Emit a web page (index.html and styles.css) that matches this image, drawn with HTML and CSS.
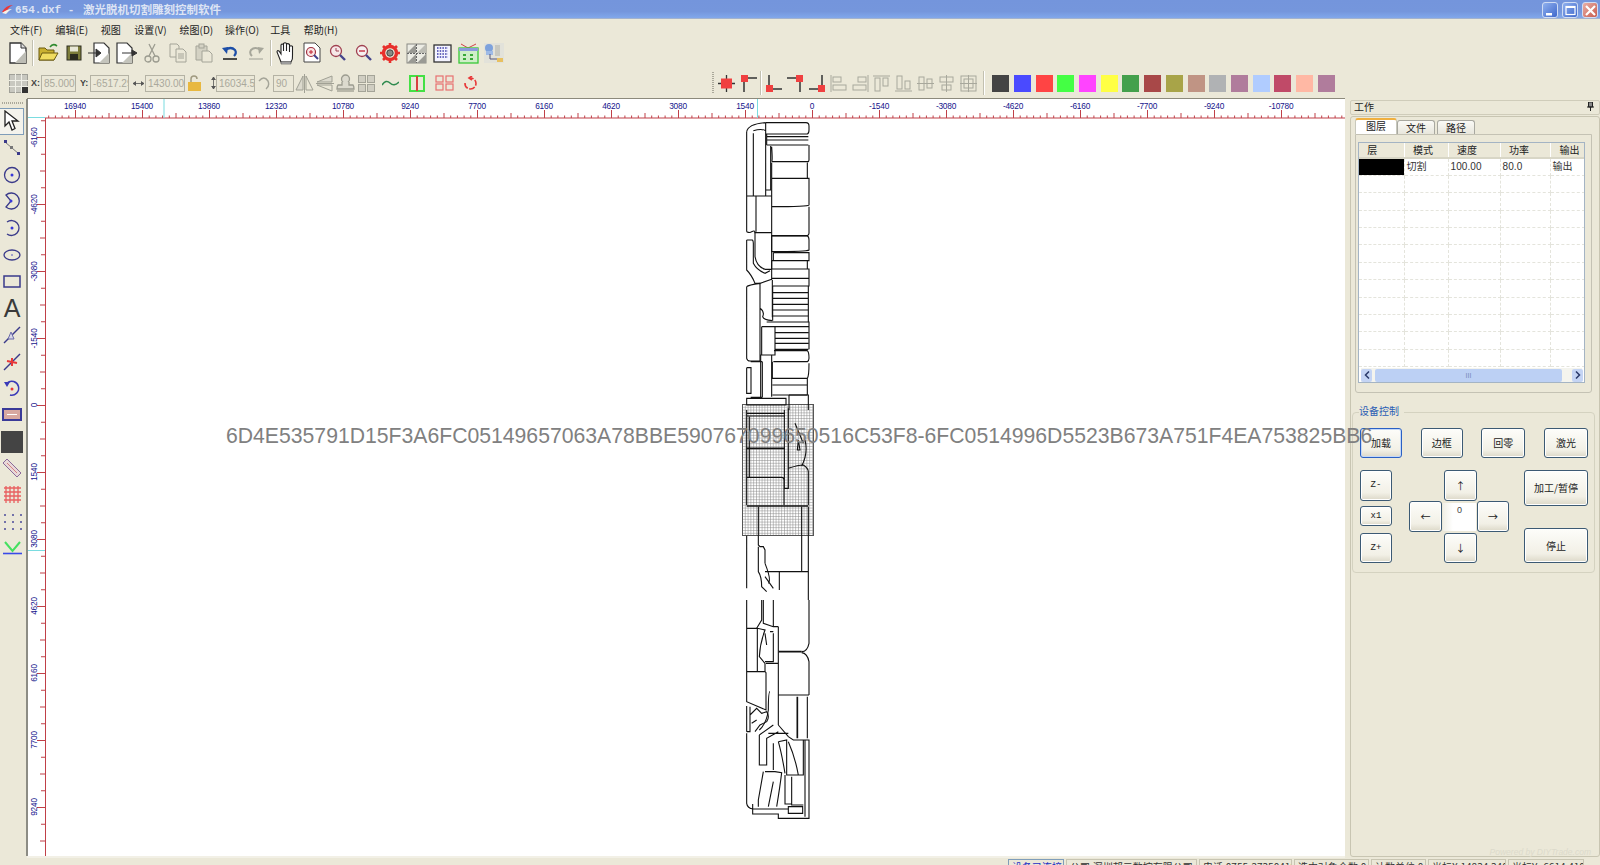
FILE: index.html
```html
<!DOCTYPE html>
<html lang="zh">
<head>
<meta charset="utf-8">
<title>654.dxf - 激光脱机切割雕刻控制软件</title>
<link rel="stylesheet" href="styles.css">
</head>
<body>
<div class="app">
  <header class="titlebar">
    <svg class="app-icon" width="11" height="11" viewBox="0 0 11 11"><path d="M0 8Q4 1 11 1Q6 3 4 9Z" fill="#e8383a"/><path d="M0 9Q5 5 10 5Q6 7 4 10Z" fill="#f4f0e8"/></svg>
    <span class="title-file">654.dxf - </span><span class="title-name">激光脱机切割雕刻控制软件</span>
    <div class="winbtns">
      <div class="winbtn"><svg width="15" height="15" viewBox="0 0 15 15"><rect x="3" y="10" width="6" height="2.5" fill="#fff"/></svg></div>
      <div class="winbtn"><svg width="15" height="15" viewBox="0 0 15 15"><rect x="3" y="3.5" width="9" height="8" fill="none" stroke="#fff" stroke-width="1.2"/><rect x="3" y="3" width="9" height="2" fill="#fff"/></svg></div>
      <div class="winbtn close"><svg width="15" height="15" viewBox="0 0 15 15"><path d="M3 3L12 12M12 3L3 12" stroke="#fff" stroke-width="2.2"/></svg></div>
    </div>
  </header>

  <nav class="menubar">
    <span class="mi w31">文件(F)</span><span class="mi w31">编辑(E)</span><span class="mi w20">视图</span><span class="mi w31">设置(V)</span><span class="mi w31">绘图(D)</span><span class="mi w31">操作(O)</span><span class="mi w20">工具</span><span class="mi w31">帮助(H)</span>
  </nav>

  <div class="toolbar tb1">
    <div class="tool"><svg width="22" height="24" viewBox="0 0 22 24"><path d="M3 2H14L19 7V22H3Z" fill="#fff" stroke="#333" stroke-width="1.3"/><path d="M19 10V22H8Z" fill="#bdbdb5"/><path d="M14 2V7H19" fill="#ddd" stroke="#333"/></svg></div>
    <div class="sep"></div>
    <div class="tool"><svg width="22" height="22" viewBox="0 0 22 22"><path d="M2 6H8L10 8H17V18H2Z" fill="#c9b030" stroke="#6a5a10"/><path d="M5 11H21L17 18H2Z" fill="#f0dc60" stroke="#6a5a10"/><path d="M13 5Q16 1 20 4" fill="none" stroke="#2e8a2e" stroke-width="1.6"/></svg></div>
    <div class="tool"><svg width="18" height="18" viewBox="0 0 18 18"><rect x="2" y="2" width="14" height="14" fill="#7d7d3a" stroke="#2c2c20"/><rect x="5" y="2.5" width="8" height="5" fill="#e8e8d8"/><rect x="5" y="10" width="8" height="6" fill="#2c2c20"/></svg></div>
    <div class="tool"><svg width="24" height="24" viewBox="0 0 24 24"><path d="M6 2H16L21 7V22H6Z" fill="#fff" stroke="#333" stroke-width="1.2"/><path d="M21 12V22H11Z" fill="#c4c4bc"/><path d="M0 12H11M8 8L13 12L8 16Z" fill="#333" stroke="#333"/></svg></div>
    <div class="tool"><svg width="24" height="24" viewBox="0 0 24 24"><path d="M3 2H13L18 7V22H3Z" fill="#fff" stroke="#333" stroke-width="1.2"/><path d="M18 12V22H8Z" fill="#c4c4bc"/><path d="M8 12H19M18 9L23 12L18 15Z" fill="#333" stroke="#333"/></svg></div>
    <div class="tool"><svg width="18" height="20" viewBox="0 0 18 20" fill="none" stroke="#9c9c90" stroke-width="1.3"><path d="M6 1L12 13M12 1L6 13"/><circle cx="5" cy="16" r="3"/><circle cx="13" cy="16" r="3"/></svg></div>
    <div class="tool"><svg width="20" height="20" viewBox="0 0 20 20" fill="#ebe8d8" stroke="#a4a498"><path d="M2 1H9L11 3V14H2Z"/><path d="M8 6H15L18 9V19H8Z"/><path d="M10 11H16M10 13H16M10 15H16"/></svg></div>
    <div class="tool"><svg width="20" height="20" viewBox="0 0 20 20" fill="#d4d2c4" stroke="#a4a498"><path d="M2 3H13V17H2Z"/><rect x="5" y="1" width="5" height="4"/><path d="M8 8H15L18 11V19H8Z" fill="#ebe8d8"/></svg></div>
    <div class="tool"><svg width="18" height="18" viewBox="0 0 18 18" fill="none"><path d="M4 6Q10 2 14 6Q16 9 13 12" stroke="#1c4ea8" stroke-width="2.2"/><path d="M1 4L7 3L6 10Z" fill="#1c4ea8"/><path d="M2 15H16" stroke="#222" stroke-width="1.6"/></svg></div>
    <div class="tool"><svg width="18" height="18" viewBox="0 0 18 18" fill="none"><path d="M14 6Q8 2 4 6Q2 9 5 12" stroke="#a6a69a" stroke-width="2"/><path d="M17 4L11 3L12 10Z" fill="#a6a69a"/><path d="M2 15H16" stroke="#b4b4a8" stroke-width="1.4"/></svg></div>
    <div class="sep"></div>
    <div class="tool"><svg width="20" height="24" viewBox="0 0 20 24"><path d="M5 21L1 11Q1 9 3 10L5 13V4Q6 2 7.500 4V10V2.500Q9 1 10.500 2.500V10V3Q12 2 13.500 3.500V11V5.500Q15 4 16.500 5.500V14Q17 18 15 21Z" fill="#fff" stroke="#222" stroke-width="1.1"/><path d="M5 21H15V23H5Z" fill="#bbb" stroke="#555" stroke-width=".6"/></svg></div>
    <div class="tool"><svg width="20" height="22" viewBox="0 0 20 22"><path d="M2 1H13L18 6V20H2Z" fill="#fff" stroke="#444"/><circle cx="9" cy="10" r="4.500" fill="#fbe4e4" stroke="#a03040" stroke-width="1.2"/><path d="M9 8V12M7 10H11" stroke="#c02030"/><path d="M12 13L16 17" stroke="#40408c" stroke-width="2"/></svg></div>
    <div class="tool"><svg width="18" height="18" viewBox="0 0 18 18"><circle cx="7" cy="7" r="5.500" fill="#f6e8e8" stroke="#a04050" stroke-width="1.3"/><path d="M7 4V7H10" stroke="#a04050" fill="none"/><path d="M11 11L16 16" stroke="#45458c" stroke-width="2.400"/></svg></div>
    <div class="tool"><svg width="18" height="18" viewBox="0 0 18 18"><circle cx="7" cy="7" r="5.500" fill="#f6f0f0" stroke="#a04050" stroke-width="1.3"/><path d="M4 7H10" stroke="#c02030" stroke-width="1.300"/><path d="M11 11L16 16" stroke="#45458c" stroke-width="2.400"/></svg></div>
    <div class="tool"><svg width="20" height="20" viewBox="0 0 20 20"><circle cx="10" cy="10" r="6.500" fill="none" stroke="#e8302c" stroke-width="3.400"/><path d="M10 0V4M10 16V20M0 10H4M16 10H20M3 3L6 6M14 14L17 17M3 17L6 14M14 6L17 3" stroke="#e8302c" stroke-width="2.600"/><circle cx="10" cy="10" r="3.200" fill="#8a8a84" stroke="#444"/></svg></div>
    <div class="tool"><svg width="21" height="21" viewBox="0 0 21 21"><rect x="1" y="1" width="19" height="19" fill="#ecece4" stroke="#8a8a84"/><path d="M1 10L10 1V10ZM11 20L20 11V20ZM1 20L10 11V20Z" fill="#9a9a94"/><path d="M11 10L20 1V10Z" fill="#bcbcb4"/><path d="M10.500 1V20M1 10.500H20" stroke="#666" stroke-dasharray="2 1"/></svg></div>
    <div class="tool"><svg width="19" height="19" viewBox="0 0 19 19"><rect x="1" y="1" width="17" height="17" fill="#f4f4ff" stroke="#333" stroke-width="1.300"/><path d="M4 4H15M4 7H15M4 10H15M4 13H15" stroke="#3a3aa8" stroke-width="1.500" stroke-dasharray="1.500 1.200"/></svg></div>
    <div class="tool"><svg width="21" height="21" viewBox="0 0 21 21"><path d="M3 1L10 5L18 1" fill="none" stroke="#d04048"/><rect x="1" y="5" width="19" height="15" fill="#cfeec8" stroke="#38c838" stroke-width="1.300"/><rect x="1" y="5" width="19" height="3" fill="#8a9adc"/><rect x="5" y="11" width="3" height="2" fill="#38a838"/><rect x="12" y="11" width="3" height="2" fill="#38a838"/><rect x="5" y="15" width="3" height="2" fill="#38a838"/><rect x="12" y="15" width="3" height="2" fill="#38a838"/></svg></div>
    <div class="tool"><svg width="22" height="22" viewBox="0 0 22 22"><rect x="1" y="1" width="20" height="20" fill="#e2e2da"/><circle cx="6" cy="6" r="4" fill="#7ea2dc"/><rect x="3" y="9" width="7" height="4" fill="#9ebae6"/><path d="M7 12V17H15" fill="none" stroke="#557"/><rect x="14" y="16" width="6" height="4" fill="#e8c060"/><rect x="12" y="3" width="5" height="11" fill="#c8c8c0"/></svg></div>
  </div>

  <div class="toolbar tb2">
    <svg class="m-none" width="19" height="19" viewBox="0 0 19 19"><rect x=".5" y=".5" width="18" height="18" fill="#c8c8c0" stroke="#a0a098"/><path d="M6.500 0V19M12.500 0V19M0 6.500H19M0 12.500H19" stroke="#f0f0e8"/><rect x="13" y="13" width="6" height="6" fill="#333"/></svg>
    <span class="lbl m3">X:</span><div class="inp m2 w35">85.000</div>
    <span class="lbl m4">Y:</span><div class="inp m2 w39">-6517.29</div>
    <svg class="m4" width="11" height="9" viewBox="0 0 11 9"><path d="M0 4.500H11M3 2.500L0 4.500L3 6.500M8 2.500L11 4.500L8 6.500" fill="#555" stroke="#555" stroke-width=".8"/></svg><div class="inp m1 w40">1430.00</div>
    <svg class="m3" width="13" height="16" viewBox="0 0 13 16"><path d="M3 7V4Q3 1 6 1Q9 1 9 4" fill="none" stroke="#a09a80" stroke-width="1.500"/><rect x="0" y="7" width="13" height="9" fill="#e8b840"/></svg>
    <svg class="m10" width="5" height="12" viewBox="0 0 5 12"><path d="M2.500 0V12M.5 3L2.500 0L4.500 3M.5 9L2.500 12L4.500 9" fill="#555" stroke="#555" stroke-width=".8"/></svg><div class="inp w39">16034.59</div>
    <svg class="m3" width="12" height="14" viewBox="0 0 12 14"><path d="M1 5Q6 -1 10 5Q12 10 8 13" fill="none" stroke="#a4a498" stroke-width="1.400"/></svg><div class="inp m3 w21">90</div>
    <svg class="m1" width="19" height="19" viewBox="0 0 19 19" fill="#dcdace" stroke="#a0a094"><path d="M8 2V16H1Z"/><path d="M11 2V16H18Z" fill="#ebe8d8"/><path d="M9.500 0V19"/></svg>
    <svg class="m2" width="18" height="19" viewBox="0 0 18 19" fill="#dcdace" stroke="#a0a094"><path d="M16 2V8H1Z"/><path d="M16 11V17L1 11Z" fill="#ebe8d8"/><path d="M0 9.500H18"/></svg>
    <svg class="m2" width="19" height="19" viewBox="0 0 19 19" fill="#dcdace" stroke="#9c9c90" stroke-width="1.300"><circle cx="9.500" cy="5" r="4"/><path d="M6 8V11H2Q1 12 1 15H18Q18 12 17 11H13V8"/><path d="M1 17H18"/></svg>
    <svg class="m3" width="17" height="17" viewBox="0 0 17 17" fill="#d0cec2" stroke="#a4a498"><rect x=".5" y=".5" width="7" height="7"/><rect x="9.500" y=".5" width="7" height="7"/><rect x=".5" y="9.500" width="7" height="7"/><rect x="9.500" y="9.500" width="7" height="7"/></svg>
    <svg class="m7" width="17" height="9" viewBox="0 0 17 9"><path d="M0 6Q4 0 8 4Q12 8 17 3" fill="none" stroke="#2e8a4e" stroke-width="1.500"/></svg>
    <svg class="m10" width="16" height="17" viewBox="0 0 16 17"><rect x="1" y="1" width="14" height="15" fill="none" stroke="#44e044" stroke-width="2"/><path d="M8 1V16" stroke="#d84040" stroke-width="2"/></svg>
    <svg class="m10" width="19" height="16" viewBox="0 0 19 16" fill="none" stroke="#e87070" stroke-width="1.200"><rect x="1" y="1" width="7" height="6"/><rect x="11" y="1" width="7" height="6"/><rect x="1" y="9" width="7" height="6"/><rect x="11" y="9" width="7" height="6"/></svg>
    <svg class="m9" width="15" height="15" viewBox="0 0 15 15" fill="none" stroke="#e83838" stroke-width="1.600"><path d="M2 7A5.500 5.500 0 1 0 7 2" stroke-dasharray="6 1.500"/><path d="M9 0L6 2L9 4" /></svg>

    <div class="grip second"></div>
    <div class="mini"><svg width="17" height="17" viewBox="0 0 17 17"><path d="M8.500 0V17M0 8.500H17" stroke="#333" stroke-width="1.300"/><rect x="3" y="3.500" width="11" height="10" fill="#f04040"/></svg></div>
    <div class="mini"><svg width="17" height="17" viewBox="0 0 17 17"><path d="M5 3H17M4 3V17" stroke="#333" stroke-width="1.500"/><rect x="1" y="0" width="7" height="7" fill="#f04040"/></svg></div>
    <div class="sep narrow"></div>
    <div class="mini"><svg width="17" height="17" viewBox="0 0 17 17"><path d="M4 0V14H17" fill="none" stroke="#333" stroke-width="1.500"/><rect x="1" y="10" width="7" height="7" fill="#f04040"/></svg></div>
    <div class="mini"><svg width="17" height="17" viewBox="0 0 17 17"><path d="M0 3H13V17" fill="none" stroke="#333" stroke-width="1.500"/><rect x="9" y="0" width="7" height="7" fill="#f04040"/></svg></div>
    <div class="mini"><svg width="17" height="17" viewBox="0 0 17 17"><path d="M0 14H13V0" fill="none" stroke="#333" stroke-width="1.500"/><rect x="9" y="10" width="7" height="7" fill="#f04040"/></svg></div>
    <div class="mini"><svg width="17" height="17" viewBox="0 0 17 17" fill="none" stroke="#a8a89c"><path d="M1 0V17"/><rect x="3" y="2" width="8" height="5"/><rect x="3" y="10" width="13" height="5"/></svg></div>
    <div class="mini"><svg width="17" height="17" viewBox="0 0 17 17" fill="none" stroke="#a8a89c"><path d="M16 0V17"/><rect x="6" y="2" width="8" height="5"/><rect x="1" y="10" width="13" height="5"/></svg></div>
    <div class="mini"><svg width="17" height="17" viewBox="0 0 17 17" fill="none" stroke="#a8a89c"><path d="M0 1H17"/><rect x="2" y="3" width="5" height="13"/><rect x="10" y="3" width="5" height="8"/></svg></div>
    <div class="mini"><svg width="17" height="17" viewBox="0 0 17 17" fill="none" stroke="#a8a89c"><path d="M0 16H17"/><rect x="2" y="1" width="5" height="13"/><rect x="10" y="6" width="5" height="8"/></svg></div>
    <div class="mini"><svg width="17" height="17" viewBox="0 0 17 17" fill="none" stroke="#a8a89c"><path d="M0 8.500H17"/><rect x="2" y="2" width="5" height="13"/><rect x="10" y="4" width="5" height="9"/></svg></div>
    <div class="mini"><svg width="17" height="17" viewBox="0 0 17 17" fill="none" stroke="#a8a89c"><path d="M8.500 0V17"/><rect x="2" y="2" width="13" height="5"/><rect x="4" y="10" width="9" height="5"/></svg></div>
    <div class="mini"><svg width="17" height="17" viewBox="0 0 17 17" fill="none" stroke="#a8a89c"><rect x="1" y="1" width="15" height="15"/><path d="M8.500 0V17M0 8.500H17"/><rect x="4" y="4" width="9" height="9"/></svg></div>
    <div class="sep narrow after"></div>
    <div class="swatches">
      <i class="sw c1"></i><i class="sw c2"></i><i class="sw c3"></i><i class="sw c4"></i><i class="sw c5"></i><i class="sw c6"></i><i class="sw c7"></i><i class="sw c8"></i><i class="sw c9"></i><i class="sw c10"></i><i class="sw c11"></i><i class="sw c12"></i><i class="sw c13"></i><i class="sw c14"></i><i class="sw c15"></i><i class="sw c12"></i>
    </div>
  </div>

  <main class="workspace">
    <aside class="sidetools">
      <div class="grip-h"></div>
      <div class="st active"><svg width="20" height="22" viewBox="0 0 20 22"><path d="M3 1V16L7 12L10 20L13 18.500L10 11H16Z" fill="#fff" stroke="#222" stroke-width="1.300"/></svg></div>
      <div class="st"><svg width="18" height="18" viewBox="0 0 18 18"><path d="M2 3L16 15" stroke="#777"/><rect x="1" y="1" width="3" height="3" fill="#3a3a8a"/><rect x="7" y="7" width="3" height="3" fill="#777"/><rect x="14" y="13" width="3" height="3" fill="#3a3a8a"/></svg></div>
      <div class="st"><svg width="18" height="18" viewBox="0 0 18 18"><circle cx="9" cy="9" r="7.500" fill="none" stroke="#3a3a8a" stroke-width="1.300"/><circle cx="9" cy="9" r="1.500" fill="#3838d8"/></svg></div>
      <div class="st"><svg width="18" height="18" viewBox="0 0 18 18"><path d="M3 3A8 8 0 1 1 3 15L8 9Z" fill="none" stroke="#3a3a8a" stroke-width="1.300"/><circle cx="8" cy="9" r="1.500" fill="#3838d8"/></svg></div>
      <div class="st"><svg width="18" height="18" viewBox="0 0 18 18"><path d="M4 3A7.500 7.500 0 1 1 4 15" fill="none" stroke="#3a3a8a" stroke-width="1.300"/><circle cx="9" cy="9" r="1.500" fill="#3838d8"/></svg></div>
      <div class="st"><svg width="18" height="12" viewBox="0 0 18 12"><ellipse cx="9" cy="6" rx="8" ry="5" fill="none" stroke="#3a3a8a" stroke-width="1.300"/><circle cx="9" cy="6" r="1" fill="#8888c8"/></svg></div>
      <div class="st"><svg width="18" height="13" viewBox="0 0 18 13"><rect x="1" y="1" width="16" height="11" fill="none" stroke="#3a3a8a" stroke-width="1.500"/></svg></div>
      <div class="st big-a">A</div>
      <div class="st"><svg width="18" height="18" viewBox="0 0 18 18"><path d="M1 17L17 1" stroke="#3a3a8a" stroke-width="1.500"/><path d="M8 6L11 13L5 13Z" fill="#d8d8e8" stroke="#6a6aa8"/></svg></div>
      <div class="st"><svg width="18" height="18" viewBox="0 0 18 18"><path d="M1 17L17 1" stroke="#3a3a8a" stroke-width="1.500"/><path d="M4 8L14 10M9 5V13" stroke="#e83838" stroke-width="2"/></svg></div>
      <div class="st"><svg width="18" height="18" viewBox="0 0 18 18"><path d="M4 4A7 7 0 1 1 7 16" fill="none" stroke="#3a3ab8" stroke-width="1.500"/><path d="M1 3L7 3L4 8Z" fill="#3a3ab8"/><circle cx="9" cy="10" r="1.500" fill="#e83838"/></svg></div>
      <div class="st"><svg width="20" height="13" viewBox="0 0 20 13"><rect x="1" y="1" width="18" height="11" fill="#d8a8a0" stroke="#3a3a98" stroke-width="2"/><path d="M5 6.500H15" stroke="#fff"/></svg></div>
      <div class="st"><div class="dark-square"></div></div>
      <div class="st"><svg width="20" height="20" viewBox="0 0 20 20"><path d="M1 5L5 1L19 15L15 19Z" fill="#e8d8d8" stroke="#8a6a9a"/><path d="M5 5L15 15" stroke="#d88080"/></svg></div>
      <div class="st"><svg width="19" height="19" viewBox="0 0 19 19"><path d="M3 1V18M7 1V18M11 1V18M15 1V18M1 3H18M1 7H18M1 11H18M1 15H18" stroke="#e86060" stroke-width="1.300"/></svg></div>
      <div class="st"><svg width="19" height="19" viewBox="0 0 19 19" fill="#4a4a9a"><circle cx="2" cy="3" r="1"/><circle cx="10" cy="3" r="1"/><circle cx="18" cy="3" r="1"/><circle cx="2" cy="10" r="1"/><circle cx="10" cy="10" r="1"/><circle cx="18" cy="10" r="1"/><circle cx="2" cy="17" r="1"/><circle cx="10" cy="17" r="1"/><circle cx="18" cy="17" r="1"/></svg></div>
      <div class="st"><svg width="21" height="14" viewBox="0 0 21 14"><path d="M3 1L10.500 10L18 1" fill="none" stroke="#44e060" stroke-width="2"/><path d="M1 12.500H20" stroke="#3a4ae8" stroke-width="1.600"/></svg></div>
    </aside>

    <section class="canvas">
      <svg class="drawing" width="1317" height="757" viewBox="28 99 1317 757">
        <defs>
          <pattern id="hticks" patternUnits="userSpaceOnUse" x="812" y="110" width="67" height="8">
            <rect x="0" y="0" width="1" height="8" fill="#c04048"/><rect x="33.500" y="3" width="1" height="5" fill="#c04048"/>
            <rect x="6.700" y="5.500" width="1" height="2.500" fill="#c04048"/><rect x="13.400" y="5.500" width="1" height="2.500" fill="#c04048"/><rect x="20.100" y="5.500" width="1" height="2.500" fill="#c04048"/><rect x="26.800" y="5.500" width="1" height="2.500" fill="#c04048"/><rect x="40.200" y="5.500" width="1" height="2.500" fill="#c04048"/><rect x="46.900" y="5.500" width="1" height="2.500" fill="#c04048"/><rect x="53.600" y="5.500" width="1" height="2.500" fill="#c04048"/><rect x="60.300" y="5.500" width="1" height="2.500" fill="#c04048"/>
          </pattern>
          <pattern id="vticks" patternUnits="userSpaceOnUse" x="37" y="405" width="8" height="67">
            <rect x="0" y="0" width="8" height="1" fill="#c04048"/><rect x="3" y="33.500" width="5" height="1" fill="#c04048"/><rect x="4" y="16.750" width="4" height="1" fill="#c04048"/><rect x="4" y="50.250" width="4" height="1" fill="#c04048"/>
          </pattern>
          <pattern id="mesh" patternUnits="userSpaceOnUse" x="742" y="404" width="2.800" height="2.800">
            <path d="M0 0H2.800M0 0V2.800" stroke="#848484" stroke-width="1"/>
          </pattern>
        </defs>
        <rect x="45" y="110" width="1300" height="8" fill="url(#hticks)"/>
        <rect x="45" y="117.500" width="1300" height="1" fill="#c04048"/>
        <rect x="37" y="118" width="8" height="738" fill="url(#vticks)"/>
        <rect x="45" y="118" width="1" height="738" fill="#c04048"/>
        <rect x="163.500" y="99" width="1" height="19" fill="#7adce0"/>
        <rect x="757" y="99" width="1" height="19" fill="#7adce0"/>
        <rect x="28" y="117" width="17" height="1" fill="#7adce0"/>
        <rect x="28" y="550" width="17" height="1" fill="#7adce0"/>
        <g class="rl">
          <text x="75" y="108.500">16940</text><text x="142" y="108.500">15400</text><text x="209" y="108.500">13860</text><text x="276" y="108.500">12320</text><text x="343" y="108.500">10780</text><text x="410" y="108.500">9240</text><text x="477" y="108.500">7700</text><text x="544" y="108.500">6160</text><text x="611" y="108.500">4620</text><text x="678" y="108.500">3080</text><text x="745" y="108.500">1540</text><text x="812" y="108.500">0</text><text x="879" y="108.500">-1540</text><text x="946" y="108.500">-3080</text><text x="1013" y="108.500">-4620</text><text x="1080" y="108.500">-6160</text><text x="1147" y="108.500">-7700</text><text x="1214" y="108.500">-9240</text><text x="1281" y="108.500">-10780</text>
          <text transform="translate(36.500 137.500) rotate(-90)">-6160</text><text transform="translate(36.500 204.500) rotate(-90)">-4620</text><text transform="translate(36.500 271.500) rotate(-90)">-3080</text><text transform="translate(36.500 338.500) rotate(-90)">-1540</text><text transform="translate(36.500 405) rotate(-90)">0</text><text transform="translate(36.500 472) rotate(-90)">1540</text><text transform="translate(36.500 539) rotate(-90)">3080</text><text transform="translate(36.500 606) rotate(-90)">4620</text><text transform="translate(36.500 673) rotate(-90)">6160</text><text transform="translate(36.500 740) rotate(-90)">7700</text><text transform="translate(36.500 807) rotate(-90)">9240</text>
        </g>

        <rect x="742.500" y="404.500" width="71" height="131" fill="url(#mesh)" stroke="#555"/>

        <g class="cad" transform="translate(720 110) scale(.33333)">
          <path d="M137 38H258Q267 38 267 48V60Q267 70 262 72H137M140 72V105M140 80H265M140 90H265M140 105H265"/>
          <path d="M100 62Q125 55 137 62M80 65Q85 42 137 38M80 65V365M100 70V258M137 38V258M80 258H155M152 108V240H137M155 110Q158 155 155 155H265M267 105V150Q267 155 262 157"/>
          <path d="M155 158V205H262V158M155 205H267V285Q265 290 155 290ZM155 290V375M267 290V370Q267 375 262 377H155M108 258V365M155 258V375"/>
          <path d="M80 365Q90 370 95 365Q105 360 105 368H155M155 378H262Q267 380 267 390V420Q262 425 155 425V378"/>
          <path d="M160 428H267V452H155M160 428V452M155 452V477M262 452V477M155 477H267V528H158M155 505H267"/>
          <path d="M158 548H265M158 565H265M158 583H265M158 600H265M158 618H265M158 636H265M158 528V632M265 528V636M140 636H267V718M165 650H267M165 668H265M165 685H265M165 700H265M165 718H265"/>
          <path d="M162 722H262Q267 725 267 745Q267 752 262 755H160M157 755V805H262Q267 800 267 760M157 825H262M157 855H262M262 805V855"/>
          <path d="M105 365V440Q110 470 135 478H155M155 375V510M80 390H97Q100 392 100 400V460Q110 480 135 490L150 482M80 390V480Q95 495 105 520H120L155 508"/>
          <path d="M80 530Q85 525 120 520M80 530V745Q82 753 90 753H120V520M157 510V622M120 595Q135 605 128 620Q130 630 157 632"/>
          <path d="M125 650H165V735H122V860M125 650V735M155 735V860M127 755V862M92 755H127M80 773H93V850H80V773M92 862H127M80 865H198V885H80ZM207 855H265V900M207 855V900"/>
        </g>
        <g class="cad" transform="translate(720 390) scale(.33333)">
          <path d="M80 70H195M80 78H195M193 60V295H205V235M205 55V260M88 80V262M80 60V262H185Q192 262 192 270V345M80 262V345"/>
          <path class="thick" d="M80 175H195M80 348H265"/>
          <path d="M205 235Q235 225 250 225Q265 235 265 245V345M255 150Q265 190 245 228M225 100L250 160M235 150L240 180H232ZM115 350V437M245 350V545M265 350V437"/>
          <path d="M80 437V595M115 437V465L120 470H130L135 480V520M115 470V545Q125 560 125 590L140 605M135 545H265M178 545V600M265 437V630M135 520Q155 570 145 580M135 560L160 595"/>
        </g>
        <g class="cad" transform="translate(720 600) scale(.33333)">
          <path d="M80 0V85H112V215M80 85V215H135L138 218V330L80 305V215M112 85L135 90Q120 130 118 170L135 190V215M175 80V155"/>
          <path d="M130 0V70L160 80H175M160 0V80M125 0V60L110 85M135 100L140 135M150 95H160M160 100V185H135"/>
          <path class="thick" d="M175 155H245M232 290V415"/>
          <path d="M245 155Q262 155 267 130V0M245 158Q262 160 267 185V285M175 155V375M138 190H175M150 275Q145 275 145 330Q140 370 118 390M175 285H267M262 290V415"/>
          <path d="M175 375L205 410L220 420H267V655H175V642H98V612M255 420V650M80 318V395M90 320V395H80M90 345L110 325L125 340L140 335Q150 350 140 365L120 375L105 395M95 370L110 360"/>
          <path d="M80 400V610Q82 625 100 627H205M118 405V495H140V415L175 395M118 405L160 375M160 430V510M145 400H205M175 425L200 420V525H250V420M175 425Q185 460 195 520M205 425Q225 470 235 525"/>
          <path d="M135 515H165L185 518Q180 560 170 620M130 515L115 600V620M160 545L145 620M195 525V612H215M215 530V615H250M205 620H248V640H205Z"/>
        </g>
      </svg>
      <div class="canvas-foot"></div>
    </section>

    <aside class="panel">
      <div class="panel-head"><span>工作</span>
        <svg width="7" height="9" viewBox="0 0 7 9"><path d="M1.500 0H5.500V5H1.500ZM0 5H7M3.500 5V9" fill="#888" stroke="#222"/></svg>
      </div>
      <div class="panel-body">
        <div class="tabs">
          <div class="tab selected">图层</div><div class="tab">文件</div><div class="tab third">路径</div>
        </div>
        <div class="tabpage">
          <div class="listbox">
            <table class="layers">
              <colgroup><col class="c-layer"><col class="c-mode"><col class="c-speed"><col class="c-power"><col class="c-out"></colgroup>
              <thead><tr><th class="th-layer">层</th><th class="th-mode">模式</th><th class="th-speed">速度</th><th class="th-power">功率</th><th class="th-out">输出</th></tr></thead>
              <tbody>
                <tr><td class="black"></td><td>切割</td><td>100.00</td><td>80.0</td><td>输出</td></tr>
                <tr><td></td><td></td><td></td><td></td><td></td></tr>
                <tr><td></td><td></td><td></td><td></td><td></td></tr>
                <tr><td></td><td></td><td></td><td></td><td></td></tr>
                <tr><td></td><td></td><td></td><td></td><td></td></tr>
                <tr><td></td><td></td><td></td><td></td><td></td></tr>
                <tr><td></td><td></td><td></td><td></td><td></td></tr>
                <tr><td></td><td></td><td></td><td></td><td></td></tr>
                <tr><td></td><td></td><td></td><td></td><td></td></tr>
                <tr><td></td><td></td><td></td><td></td><td></td></tr>
                <tr><td></td><td></td><td></td><td></td><td></td></tr>
                <tr><td></td><td></td><td></td><td></td><td></td></tr>
              </tbody>
            </table>
            <div class="scrollbar">
              <div class="sb-btn"><svg width="6" height="8" viewBox="0 0 6 8"><path d="M5 0.500L1.500 4L5 7.500" fill="none" stroke="#2a3a6a" stroke-width="1.500"/></svg></div>
              <div class="sb-thumb"><span>III</span></div>
              <div class="sb-btn"><svg width="6" height="8" viewBox="0 0 6 8"><path d="M1 0.500L4.500 4L1 7.500" fill="none" stroke="#2a3a6a" stroke-width="1.500"/></svg></div>
            </div>
          </div>
        </div>
        <div class="groupbox">
          <div class="legend">设备控制</div>
          <div class="btn-row">
            <button class="btn focus w42">加载</button><button class="btn w42">边框</button><button class="btn w44">回零</button><button class="btn w44">激光</button>
          </div>
          <div class="jog">
            <button class="btn g-zminus mono">Z-</button>
            <button class="btn g-x1 mono">x1</button>
            <button class="btn g-zplus mono">Z+</button>
            <button class="btn g-up">↑</button>
            <button class="btn g-left">←</button>
            <div class="g-center">0</div>
            <button class="btn g-right">→</button>
            <button class="btn g-down">↓</button>
            <button class="btn g-run">加工/暂停</button>
            <button class="btn g-stop">停止</button>
          </div>
        </div>
        <div class="watermark">Powered by DIYTrade.com</div>
      </div>
    </aside>
  </main>

  <footer class="statusbar">
    <span class="cell s56 blue">设备已连接</span><span class="cell s131">公司:深圳邦元数控有限公司</span><span class="cell s93">电话:0755-27350418</span><span class="cell s75">选中对象个数:0</span><span class="cell s55">计数单位:0</span><span class="cell s78">光标X:14834.340</span><span class="cell s76">光标Y:-6614.410</span>
  </footer>

  <div class="hexline">6D4E535791D15F3A6FC05149657063A78BBE590767099650516C53F8-6FC0514996D5523B673A751F4EA753825BB6</div>
</div>
</body>
</html>
```
FILE: styles.css
```css
* { box-sizing: border-box; }
html, body { margin: 0; height: 100%; overflow: hidden; }
body { background: #ebe8d8; font-family: "Noto Sans CJK SC", "Liberation Sans", sans-serif; color: #222; }
.app { position: relative; width: 1600px; height: 865px; display: flex; flex-direction: column; overflow: hidden; background: #ebe8d8; }

.titlebar { height: 19px; flex: none; display: flex; align-items: center; padding-left: 2px; color: #dde4f4; font-weight: 700; font-size: 11.500px; background: linear-gradient(#7495dc 0, #7596dc 60%, #80a6ea 92%, #b4b8c0 100%); }
.app-icon { margin-right: 2px; }
.title-file { font-family: "Liberation Mono", monospace; font-size: 11px; white-space: pre; }
.title-name { margin-left: 2px; line-height: 1; }
.winbtns { margin-left: auto; display: flex; gap: 4px; padding-right: 2px; }
.winbtn { width: 16px; height: 16px; border: 1px solid #cfdcf4; border-radius: 3px; background: linear-gradient(135deg, #8fb0ee, #3f68cc); }
.winbtn svg { display: block; }
.winbtn.close { background: linear-gradient(135deg, #e8b0a8, #c85a4c); }

.menubar { height: 20px; flex: none; display: flex; align-items: center; padding-left: 10px; gap: 14.400px; font-size: 10px; }
.mi { white-space: nowrap; }
.mi.w31 { width: 31px; }
.mi.w20 { width: 19px; }

.toolbar { flex: none; display: flex; align-items: center; }
.tb1 { height: 30px; padding-left: 5px; margin-top: -1px; }
.tb2 { height: 30px; margin-top: 0; padding-left: 9px; font-size: 10px; }
.tool { width: 26px; height: 30px; flex: none; display: flex; align-items: center; justify-content: center; }
.tool svg { display: block; }
.sep { width: 4px; height: 26px; flex: none; background: linear-gradient(90deg, transparent 1px, #c2c0b0 1px, #c2c0b0 2px, #fff 2px, #fff 3px, transparent 3px); }
.sep.narrow { height: 24px; }
.sep.after { margin-left: 3px; }
.tb2 > svg { flex: none; display: block; }

.m1 { margin-left: 1px; } .m2 { margin-left: 2px; } .m3 { margin-left: 3px; } .m4 { margin-left: 4px; }
.m7 { margin-left: 7px; } .m9 { margin-left: 9px; } .m10 { margin-left: 10px; }

.lbl { width: 8px; flex: none; font-family: "Liberation Sans", sans-serif; font-size: 9px; font-weight: 700; color: #444; white-space: nowrap; }
.inp { height: 17px; flex: none; border: 1px solid #b4b2a4; overflow: hidden; white-space: nowrap; font: 10px/15px "Liberation Sans", sans-serif; color: #aaa89c; padding-left: 2px; }
.w35 { width: 35px; } .w39 { width: 39px; } .w40 { width: 40px; } .w21 { width: 21px; }

.grip { width: 2px; height: 22px; flex: none; background: repeating-linear-gradient(#aaa89a 0 1px, transparent 1px 2px); }
.second { margin-left: 234px; margin-right: 2px; }
.mini { width: 21.600px; height: 30px; flex: none; display: flex; align-items: center; justify-content: center; }
.mini svg { display: block; }
.swatches { display: flex; gap: 4.730px; margin-left: 6px; }
.sw { display: block; width: 17px; height: 17px; }
.c1 { background: #444444; } .c2 { background: #4a4aff; } .c3 { background: #ff4444; } .c4 { background: #44ff44; }
.c5 { background: #ff44ff; } .c6 { background: #ffff44; } .c7 { background: #44a04c; } .c8 { background: #a84848; }
.c9 { background: #a8a448; } .c10 { background: #c09484; } .c11 { background: #b0b2b4; } .c12 { background: #b07c9c; }
.c13 { background: #b0ccff; } .c14 { background: #c04a68; } .c15 { background: #ffb8a4; }

.workspace { height: 760px; flex: none; display: flex; }
.sidetools { width: 27px; flex: none; display: flex; flex-direction: column; align-items: flex-start; }
.grip-h { width: 22px; height: 2px; margin: 4px 0 4px 2px; flex: none; background: repeating-linear-gradient(90deg, #aaa89a 0 1px, transparent 1px 2px); }
.st { width: 24px; height: 26.700px; flex: none; display: flex; align-items: center; justify-content: center; }
.st svg { display: block; }
.st.active { background: #f4f3ec; border: 1px solid #7f9db9; border-left: 0; }
.big-a { font: 25px/26px "Liberation Sans", sans-serif; color: #3a3a3a; }
.dark-square { width: 22px; height: 22px; background: #444; }

.canvas { width: 1318px; flex: none; border-top: 1px solid #8c8a7c; display: flex; flex-direction: column; }
.drawing { display: block; flex: none; background: #fff; box-shadow: -1px 0 0 #8c8c84, -2px 0 0 #8c8c84; margin-left: 1px; }
.canvas-foot { height: 2px; background: #f2f0e6; }
.rl text { font: 8.300px "Liberation Sans", sans-serif; fill: #14148c; text-anchor: middle; letter-spacing: -.2px; }
.cad path { fill: none; stroke: #111; stroke-width: 3.300; }
.cad path.thick { stroke-width: 5; }

.panel { width: 250px; flex: none; margin-left: 5px; padding-top: 2px; position: relative; }
.panel-head { height: 15px; padding: 0 5px 2px 3px; display: flex; justify-content: space-between; align-items: center; font-size: 10px; border: 1px solid #cfccba; border-radius: 2px; }
.panel-body { height: 741px; margin-top: 1px; border: 1px solid #c8c5b2; border-radius: 3px; padding: 1px 0 0 4px; position: relative; }

.tabs { height: 16px; display: flex; align-items: flex-end; font-size: 10px; }
.tab { width: 38px; height: 14px; border: 1px solid #a8a8a0; border-bottom: 0; border-radius: 3px 3px 0 0; background: linear-gradient(#fafaf6, #e8e6dc); text-align: center; line-height: 13px; }
.tab.selected { width: 42px; height: 16px; background: #fff; border-top: 2px solid #f0b040; border-color: #f0b040 #c8c8bc #fff; line-height: 12px; }
.tab.third { margin-left: 2px; }
.tabpage { width: 237px; height: 259px; border: 1px solid #c4c2b4; border-radius: 0 0 3px 3px; padding: 7px 0 0 2px; }
.listbox { width: 227px; height: 241px; border: 1px solid #a4b4c4; background: #fff; display: flex; flex-direction: column; overflow: hidden; }
.layers { width: 225px; height: 224px; flex: none; table-layout: fixed; border-collapse: collapse; font-size: 10px; }
.c-layer { width: 45px; } .c-mode { width: 44px; } .c-speed { width: 52px; } .c-power { width: 50px; } .c-out { width: 34px; }
.layers th { height: 15px; padding: 0; font-weight: 400; background: #ebe8d8; border-bottom: 2px solid #d8d6c6; border-right: 1px solid #fff; line-height: 1; }
.layers .th-layer { padding-right: 18px; }
.layers .th-mode { padding-right: 6px; }
.layers .th-speed { padding-right: 14px; }
.layers .th-power { padding-right: 12px; }
.layers .th-out { text-align: right; padding-right: 4px; }
.layers td { height: 16.700px; padding: 0 0 0 2px; border-bottom: 1px dashed #e4e4dc; border-right: 1px dashed #e4e4dc; font-family: "Liberation Sans", "Noto Sans CJK SC", sans-serif; letter-spacing: .1px; color: #333; white-space: nowrap; line-height: 1; }
.layers td.black { background: #000; }
.scrollbar { height: 14px; margin: 1px 2px 0; flex: none; display: flex; align-items: center; gap: 3px; background: #f4f4ee; }
.sb-btn { width: 11px; height: 13px; flex: none; border-radius: 2px; background: #c4d4f4; display: flex; align-items: center; justify-content: center; }
.sb-thumb { width: 187px; height: 13px; flex: none; margin-right: 7px; border-radius: 2px; background: #bcd0f4; color: #7a8ab8; font: 7px/13px "Liberation Sans", sans-serif; text-align: center; }

.groupbox { width: 243px; height: 161px; margin: 19px 0 0 -3px; border: 1px solid #d4d2c0; border-radius: 4px; padding-left: 7px; }
.legend { width: fit-content; height: 14px; margin: -9px 0 10px -1px; padding-right: 5px; background: #ebe8d8; font-size: 10px; line-height: 14px; color: #2a5cb4; }
.btn-row { width: 228px; height: 30px; display: flex; justify-content: space-between; }
.btn { margin: 0; padding: 0; border: 1px solid #3c5a74; border-radius: 3px; background: linear-gradient(#fdfdfa, #f2f0e6 75%, #dcd8c8); font-family: "Noto Sans CJK SC", "Liberation Sans", sans-serif; font-size: 10px; color: #222; line-height: 1; box-shadow: inset 0 0 0 1px #fff; }
.btn.focus { border-color: #2a60c4; box-shadow: inset 0 0 0 1px #c4d8f8; }
.btn.w42 { width: 42px; } .btn.w44 { width: 44px; }
.btn.mono { font-family: "Liberation Mono", monospace; font-size: 9px; }
.jog { width: 228px; margin-top: 12px; display: grid; grid-template-columns: 32px 17px 34px 34px 32px 15px 64px; grid-template-rows: 31px 5px 20px 2px 4px 1px 30px; }
.g-zminus { grid-area: 1 / 1; }
.g-x1 { grid-area: 3 / 1; }
.g-zplus { grid-area: 7 / 1; }
.g-up { grid-area: 1 / 4; margin-left: 1px; }
.g-left { grid-area: 2 / 3 / 6 / 4; margin-right: 1px; }
.g-center { grid-area: 2 / 4 / 6 / 5; margin: 2px 1px 1px 0; background: linear-gradient(90deg, #f0efe6, #fff 30%); font: 9px/14px "Liberation Sans", sans-serif; text-align: center; color: #444; }
.g-right { grid-area: 2 / 5 / 6 / 6; }
.g-down { grid-area: 7 / 4; margin-left: 1px; }
.g-run { grid-area: 1 / 7 / 3 / 8; }
.g-stop { grid-area: 5 / 7 / 8 / 8; }
.watermark { position: absolute; right: 8px; bottom: -1px; font: italic 8.500px "Liberation Sans", sans-serif; color: #dcdacb; white-space: nowrap; }

.statusbar { height: 7px; flex: none; display: flex; justify-content: flex-end; gap: 2px; padding: 1px 16px 0 0; overflow: hidden; font-size: 10px; color: #333; }
.cell { height: 14px; flex: none; border: 1px solid #c8c5b2; white-space: nowrap; overflow: hidden; line-height: 13px; padding-left: 3px; }
.cell.blue { color: #1c2cc4; border-color: #7f9db9; }
.s56 { width: 56px; } .s131 { width: 131px; } .s93 { width: 93px; } .s75 { width: 75px; } .s55 { width: 55px; } .s78 { width: 78px; } .s76 { width: 76px; }

.hexline { position: absolute; left: 226px; top: 423px; font: 21.200px/26px "Liberation Sans", sans-serif; color: #808080; white-space: nowrap; pointer-events: none; }
```
